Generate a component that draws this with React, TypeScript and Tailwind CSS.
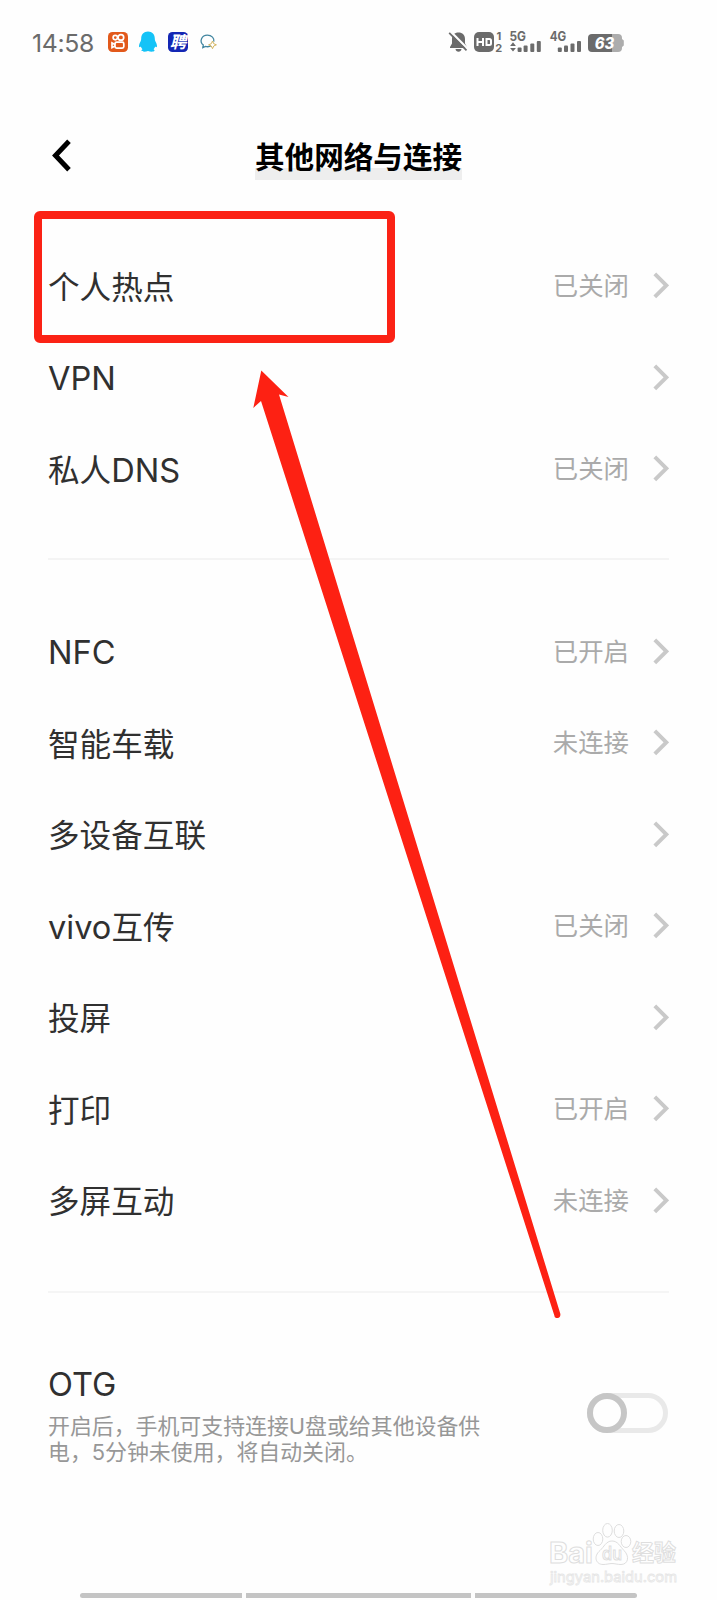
const networkRows = [
  { latin: '', label: '个人热点', value: '已关闭' },
  { latin: 'VPN', label: '', value: '' },
  { before: '私人', latin: 'DNS', label: '', value: '已关闭' },
]

const deviceRows = [
  { latin: 'NFC', label: '', value: '已开启' },
  { latin: '', label: '智能车载', value: '未连接' },
  { latin: '', label: '多设备互联', value: '' },
  { latin: 'vivo', label: '互传', value: '已关闭' },
  { latin: '', label: '投屏', value: '' },
  { latin: '', label: '打印', value: '已开启' },
  { latin: '', label: '多屏互动', value: '未连接' },
]

const AppIcons = () => {
  return (
    <svg width="112" height="24" viewBox="0 0 112 24" fill="none">
      {/* video app */}
      <rect x="1" y="2" width="20" height="20" rx="4.5" fill="#e2591b" />
      <g stroke="#fff" strokeWidth="1.7">
        <circle cx="8.3" cy="7.6" r="2.2" />
        <circle cx="13.9" cy="7.4" r="2.8" />
        <rect x="8" y="12.2" width="8.8" height="6" rx="1.6" />
        <path d="M8 14.6 5 13v4.6l3-1.5" />
      </g>
      {/* penguin */}
      <path d="M41 1.600c-4.300 0-6.800 3-6.800 6.800 0 1.600-.4 2.300-1.200 4-1 2.200-1.300 4.100-.7 4.600.4.4 1 0 1.500-.6.4 1.200.9 2.100 1.700 2.900-.7.4-1.200.9-1 1.500.3 1 3.900 1.100 6.500.3 2.600.8 6.200.7 6.500-.3.2-.6-.3-1.100-1-1.500.8-.8 1.300-1.700 1.700-2.900.5.6 1.100 1 1.500.6.6-.5.3-2.400-.7-4.600-.8-1.700-1.200-2.400-1.200-4 0-3.800-2.500-6.800-6.800-6.800z" fill="#15c3f7" />
      {/* recruiting app */}
      <rect x="61" y="2" width="20" height="20" rx="4.5" fill="#1427b4" />
      <text x="71" y="18" textAnchor="middle" fontSize="16.5" fontWeight="700" fontStyle="italic" fontFamily="Noto Sans CJK SC" fill="#fff">聘</text>
      {/* chat bubble */}
      <path d="M104.500 15.500c-1.500 1-4 1.500-6 .9l-2.700 1.300.5-2.600c-4.500-3.900-1.500-10 4-10 4.500 0 7.200 3.300 6.500 6.500" stroke="#4286a0" strokeWidth="1.300" />
      <path d="M105.500 11l1.200 2.700 2.700 1.100-2.700 1.200-1.200 2.700-1.200-2.700-2.700-1.200 2.700-1.100z" fill="#fff" stroke="#d6b660" strokeWidth="1" />
    </svg>
  )
}

const SystemIcons = () => {
  return (
    <svg className="overflow-visible" width="178" height="24" viewBox="0 0 178 24" fill="#6b6b6b" fontFamily="Inter, sans-serif">
      {/* muted bell */}
      <path d="M10.500 2.500c-4 0-6.500 2.600-6.500 6.500v4.500L2 17v1h17v-1l-2-3.500V9c0-3.900-2.500-6.500-6.500-6.500zM7.500 19h6c-.3 1.800-1.300 2.700-3 2.700s-2.700-.9-3-2.700z" />
      <path d="M2.400 1.400 20.200 19.200" stroke="#fefefe" strokeWidth="2.200" />
      <path d="M1.200 2.800 18.500 20.300" stroke="#6b6b6b" strokeWidth="1.800" />
      {/* HD */}
      <rect x="26" y="2" width="20" height="20" rx="5" />
      <path d="M29.500 8v8M35 8v8M29.500 12H35M38.500 9v6h2.800q1.700 0 1.700-1.500v-3q0-1.500-1.700-1.500z" fill="none" stroke="#fff" strokeWidth="2" />
      <text x="50.800" y="9.800" fontSize="11" fontWeight="700" textAnchor="middle">1</text>
      <text x="50.800" y="22" fontSize="11" fontWeight="700" textAnchor="middle">2</text>
      {/* 5G */}
      <text x="61.500" y="11.300" fontSize="12.800" fontWeight="700" textLength="16.500" lengthAdjust="spacingAndGlyphs">5G</text>
      <path d="M65 12.300l2.900 3.700h-5.800zM65 21.600l2.900-3.700h-5.800z" />
      <g>
        <rect x="69.600" y="17.500" width="4" height="4.500" rx="1" />
        <rect x="75.600" y="15.500" width="4" height="6.500" rx="1" />
        <rect x="82.300" y="13.500" width="4" height="8.500" rx="1" />
        <rect x="88.800" y="11" width="4" height="11" rx="1" />
      </g>
      {/* 4G */}
      <text x="101.800" y="11.300" fontSize="12.800" fontWeight="700" textLength="16.500" lengthAdjust="spacingAndGlyphs">4G</text>
      <g>
        <rect x="109.800" y="17.500" width="4" height="4.500" rx="1" />
        <rect x="116" y="15.500" width="4" height="6.500" rx="1" />
        <rect x="122.500" y="13.500" width="4" height="8.500" rx="1" />
        <rect x="129" y="11" width="4" height="11" rx="1" />
      </g>
      {/* battery */}
      <path d="M160 4h10q4 0 4 4v1l1.800 1.500v5L174 17v1q0 4-4 4h-10z" fill="#adadad" />
      <path d="M144 4h20v18h-20q-4 0-4-4V8q0-4 4-4z" />
      <text x="156.500" y="18.800" fontSize="16" fontWeight="800" fontStyle="italic" textAnchor="middle" fill="#fff" textLength="19.500" lengthAdjust="spacingAndGlyphs">63</text>
    </svg>
  )
}

const Chevron = () => {
  return (
    <svg className="ml-6 block shrink-0" width="16" height="28" viewBox="0 0 16 28" fill="none">
      <path d="M1.800 2.900 13.300 14.400 1.800 25.900" stroke="#c9c9c9" strokeWidth="3.900" />
    </svg>
  )
}

const SettingRow = ({ before, latin, label, value }: { before?: string; latin: string; label: string; value: string }) => {
  return (
    <li className="flex h-[91.5px] items-center">
      <span className="flex-1 pt-[5px] text-[31.6px] leading-[46px] text-[#303030]">
        {before}
        {latin ? <span className="text-[32.6px] leading-none">{latin}</span> : ""}
        {label}
      </span>
      <span className="pt-0.5 text-[25.4px] leading-[36px] text-[#aaaaaa]">{value}</span>
      <Chevron />
    </li>
  )
}

const Watermark = () => {
  return (
    <svg className="absolute left-[546px] top-[1520px] overflow-visible" width="136" height="72" viewBox="0 0 136 72" fill="#fefefe" stroke="#dedede" strokeWidth="1" fontFamily="Inter, Noto Sans CJK SC, sans-serif">
      <text x="3" y="43" fontSize="28" fontWeight="700" textLength="44" lengthAdjust="spacingAndGlyphs">Bai</text>
      <ellipse cx="52" cy="19" rx="4.800" ry="6.500" />
      <ellipse cx="61.500" cy="10.300" rx="4.800" ry="6.800" />
      <ellipse cx="73" cy="11" rx="4.800" ry="6.500" />
      <ellipse cx="80" cy="21.500" rx="4.800" ry="6" />
      <path d="M66 21c-6 0-8 6-12 9.500-7 6-4 14 3 14 4 0 6-1 9-1s5 1 9 1c7 0 9-8 3-14-4-4-6-9.500-12-9.500z" />
      <text x="56" y="40" fontSize="18" fontWeight="500" textLength="20" lengthAdjust="spacingAndGlyphs">du</text>
      <text x="86" y="41" fontSize="23" fontWeight="700" textLength="44" lengthAdjust="spacingAndGlyphs">经验</text>
      <text x="4" y="62" fontSize="14.500" strokeWidth=".8" stroke="#e6e6e6" textLength="127" lengthAdjust="spacingAndGlyphs">jingyan.baidu.com</text>
    </svg>
  )
}

const Annotation = () => {
  return (
    <>
      <div className="absolute left-[34px] top-[211px] h-[132px] w-[361px] rounded-[6px] border-8 border-[#fb2215]"></div>
      <svg className="absolute left-0 top-0" width="717" height="1600" viewBox="0 0 717 1600">
        <path d="M261.300 370.500 288.500 397 279 394.500 560.400 1314Q560.500 1318 557.500 1318T554.500 1316L261 401 253.300 408z" fill="#fd2113" />
      </svg>
    </>
  )
}

export default function App() {
  return (
    <div className="relative flex h-[1600px] w-[717px] flex-col overflow-hidden bg-[#fefefe] font-['Inter','Noto_Sans_CJK_SC',sans-serif]">
      <div className="flex h-[84px] items-center pl-8 pr-[91px]">
        <span className="w-[75px] whitespace-nowrap pt-[3px] text-[24.8px] leading-none tracking-[-0.3px] text-[#6b6b6b]">14:58</span>
        <AppIcons />
        <div className="ml-auto"><SystemIcons /></div>
      </div>

      <header className="flex h-[155.5px] items-start pl-[51px] pt-[52px]">
        <svg className="mt-[3px]" width="20" height="34" viewBox="0 0 20 34" fill="none">
          <path d="M18 2.300 4.500 16.500 18 30.700" stroke="#000" strokeWidth="5" />
        </svg>
        <h1 className="ml-[184px] bg-[linear-gradient(transparent_32px,#eeeeee_32px)] pb-[1px] text-[29.6px] font-bold leading-[43px] text-black">其他网络与连接</h1>
      </header>

      <main className="px-12">
        <ul>
          {networkRows.map(row => <SettingRow key={row.latin + row.label} {...row} />)}
        </ul>
        <hr className="mb-[45px] mt-[44px] border-t-2 border-[#f4f4f4]" />
        <ul>
          {deviceRows.map(row => <SettingRow key={row.latin + row.label} {...row} />)}
        </ul>
        <hr className="mt-[45px] border-t-2 border-[#f5f5f5]" />

        <div className="mt-[68px] flex justify-between">
          <div>
            <p className="text-[32.6px] leading-[46px] text-[#303030]">OTG</p>
            <p className="mt-[6px] whitespace-nowrap text-[21.9px] leading-[26.3px] text-[#979797]">
              开启后，手机可支持连接U盘或给其他设备供<br />
              电，5分钟未使用，将自动关闭。
            </p>
          </div>
          <div className="mr-[1px] mt-8 h-10 w-[81px] shrink-0 rounded-full border-[5px] border-[#e9e9e9]">
            <div className="-ml-[5px] -mt-[5px] size-10 rounded-full border-[6px] border-[#c6c6c6] bg-[#fefefe]"></div>
          </div>
        </div>
      </main>

      <div className="mb-[2px] mt-auto flex gap-1 pl-20">
        <div className="h-[5px] w-[162px] rounded-l-full bg-[#c4c4c4]"></div>
        <div className="h-[5px] w-[225px] bg-[#c4c4c4]"></div>
        <div className="h-[5px] w-[162px] rounded-r-full bg-[#c4c4c4]"></div>
      </div>

      <Watermark />
      <Annotation />
    </div>
  )
}
